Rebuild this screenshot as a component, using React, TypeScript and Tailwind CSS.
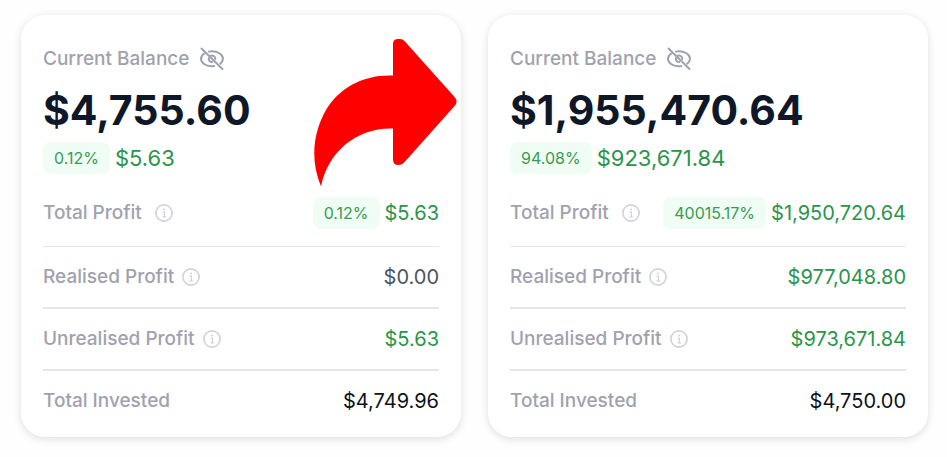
import React from "react";

interface Row {
  label: string;
  value: string;
  tone: string;
  badge?: string;
  info?: boolean;
}

interface Balance {
  total: string;
  percent: string;
  change: string;
  rows: Row[];
}

const before: Balance = {
  total: "$4,755.60",
  percent: "0.12%",
  change: "$5.63",
  rows: [
    { label: "Total Profit", value: "$5.63", tone: "text-[#2a9549]", badge: "0.12%", info: true },
    { label: "Realised Profit", value: "$0.00", tone: "text-[#4b5563]", info: true },
    { label: "Unrealised Profit", value: "$5.63", tone: "text-[#2a9549]", info: true },
    { label: "Total Invested", value: "$4,749.96", tone: "text-[#0d121c]" },
  ],
};

const after: Balance = {
  total: "$1,955,470.64",
  percent: "94.08%",
  change: "$923,671.84",
  rows: [
    { label: "Total Profit", value: "$1,950,720.64", tone: "text-[#2a9549]", badge: "40015.17%", info: true },
    { label: "Realised Profit", value: "$977,048.80", tone: "text-[#2a9549]", info: true },
    { label: "Unrealised Profit", value: "$973,671.84", tone: "text-[#2a9549]", info: true },
    { label: "Total Invested", value: "$4,750.00", tone: "text-[#0d121c]" },
  ],
};

const EyeOffIcon: React.FC = () => (
  <svg viewBox="0 0 24 24" className="size-6" fill="none" stroke="currentColor" strokeWidth="2" strokeLinecap="round" aria-hidden="true">
    <path d="M1.500 1.500 22.500 22" />
    <path d="M9 4.600C10 4.300 11 4.200 12 4.200c6 0 11 3.600 11 7.600 0 1.900-1.100 3.500-2.700 4.800" />
    <path d="M4.300 6.500C2.200 7.900 1 9.800 1 11.800c0 4 4.500 7.500 10.500 7.500 1 0 1.900-.1 2.700-.3" />
    <path d="M10.800 8.700c2.400-.7 4.700 1 4.500 3.300" />
    <path d="M8.900 10.900c-.5 2.300 1 4.200 3.300 4.200" />
  </svg>
);

const InfoIcon: React.FC = () => (
  <svg viewBox="0 0 18 18" className="size-[18px]" fill="none" stroke="currentColor" aria-hidden="true">
    <circle cx="9" cy="9" r="8.100" strokeWidth="1.700" />
    <path d="M7.600 8.200H9.400V12.500M7.600 12.800H11" strokeWidth="1.200" />
    <circle cx="9" cy="5.500" r="1" fill="currentColor" stroke="none" />
  </svg>
);

const Arrow: React.FC = () => (
  <svg viewBox="0 0 143 148" className="absolute top-6 right-1 w-[143px] h-[148px]" fill="#ff0000" aria-hidden="true">
    <path d="M79 36.500V5Q79 0 84 0H86Q88.500 0 90.500 2L141 58.500Q144 62.500 141 66.500L91 122.500Q88 126 84.500 126Q79 126 79 120.500V89.500C42 88.500 14 113 7 147.500C-4 121 -1 94 12 71C25 49 49 35.500 79 36.500Z" />
  </svg>
);

const Badge: React.FC<{ children: React.ReactNode }> = ({ children }) => (
  <span className="flex h-8 items-center rounded-lg bg-[#effdf4] px-[11px] text-base text-[#3b9a55]">
    {children}
  </span>
);

const BalanceCard: React.FC<{ data: Balance; children?: React.ReactNode }> = ({ data, children }) => (
  <section className="relative min-w-0 flex-1 rounded-3xl bg-white px-[22px] pt-[30px] pb-1.5 shadow-[0_2px_8px_rgba(0,0,0,0.13)]">
    <div className="flex h-7 items-center gap-[11px] text-[19px] font-medium text-[#9fa2ae]">
      <h2>Current Balance</h2>
      <button type="button" aria-label="Hide balance">
        <EyeOffIcon />
      </button>
    </div>
    <p className="mt-[13px] text-[41px] leading-12 font-bold text-[#0f1828]">{data.total}</p>
    <div className="mt-2 mb-1.5 flex items-center gap-[5px]">
      <Badge>{data.percent}</Badge>
      <span className="text-[22px] leading-8 text-[#2a9549]">{data.change}</span>
    </div>
    <dl className="text-[19px]">
      {data.rows.map((row, i) => (
        <div
          key={row.label}
          className={`flex items-center justify-between border-[#e5e6e8] ${
            i === 0 ? "h-[67px] border-b" : i < 3 ? "h-[62px] border-b-2" : "h-[60px]"
          }`}
        >
          <dt className={`flex items-center font-medium text-[#9fa2ae] ${i === 0 ? "gap-[13px]" : "gap-2"}`}>
            {row.label}
            {row.info && (
              <button type="button" aria-label={`About ${row.label}`} className="text-[#d1d3d8]">
                <InfoIcon />
              </button>
            )}
          </dt>
          <dd className={`flex items-center gap-[5px] text-xl ${row.tone}`}>
            {row.badge && <Badge>{row.badge}</Badge>}
            {row.value}
          </dd>
        </div>
      ))}
    </dl>
    {children}
  </section>
);

const App: React.FC = () => {
  return (
    <main className="flex items-start gap-[27px] bg-[#fefefe] pt-[15px] pr-[19px] pb-5 pl-[21px] font-[Inter,sans-serif]">
      <BalanceCard data={before}>
        <Arrow />
      </BalanceCard>
      <BalanceCard data={after} />
    </main>
  );
};

export default App;
